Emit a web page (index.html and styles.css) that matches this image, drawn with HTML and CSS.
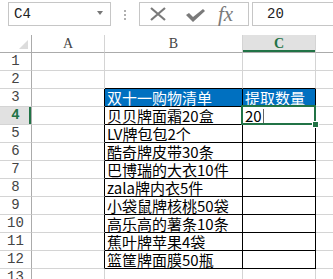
FILE: index.html
```html
<!DOCTYPE html>
<html lang="zh-CN">
<head>
    <meta charset="UTF-8">
    <title>双十一购物清单</title>
    <link rel="stylesheet" href="styles.css">
</head>
<body>
    <div class="formula-bar">
        <div class="name-box">
            <span>C4</span>
            <span class="arrow"></span>
        </div>
        <div class="grip">
            <i></i><i></i><i></i>
        </div>
        <div class="fn-buttons">
            <svg class="icon-x" width="18" height="14" viewBox="0 0 18 14">
                <path d="M2 1 L16 13 M16 1 L2 13" stroke="#7a7a7a" stroke-width="2.2" fill="none"/>
            </svg>
            <svg class="icon-check" width="21" height="15" viewBox="0 0 21 15">
                <path d="M1 7 L4 5 L8 9 L18 1 L20 3 L8 14 Z" fill="#7a7a7a"/>
            </svg>
            <span class="fx">fx</span>
        </div>
        <div class="formula-input">20</div>
    </div>

    <div class="grid-wrap">
        <table class="sheet">
            <tr class="col-head">
                <th class="corner">
                    <svg width="9" height="9" viewBox="0 0 9 9"><path d="M9 0 L9 9 L0 9 Z" fill="#dcdcdc"/></svg>
                </th>
                <th class="w-a">A</th>
                <th class="w-b">B</th>
                <th class="w-c sel">C</th>
                <th class="w-d"></th>
            </tr>
            <tr><th>1</th><td></td><td></td><td></td><td></td></tr>
            <tr><th>2</th><td></td><td class="top"></td><td class="top"></td><td></td></tr>
            <tr><th>3</th><td class="edge"></td><td class="box head">双十一购物清单</td><td class="box head">提取数量</td><td></td></tr>
            <tr><th class="sel">4</th><td class="edge"></td><td class="box">贝贝牌面霜20盒</td><td class="box active">20<span class="caret"></span></td><td></td></tr>
            <tr><th>5</th><td class="edge"></td><td class="box">LV牌包包2个</td><td class="box"></td><td></td></tr>
            <tr><th>6</th><td class="edge"></td><td class="box">酷奇牌皮带30条</td><td class="box"></td><td></td></tr>
            <tr><th>7</th><td class="edge"></td><td class="box">巴博瑞的大衣10件</td><td class="box"></td><td></td></tr>
            <tr><th>8</th><td class="edge"></td><td class="box">zala牌内衣5件</td><td class="box"></td><td></td></tr>
            <tr><th>9</th><td class="edge"></td><td class="box">小袋鼠牌核桃50袋</td><td class="box"></td><td></td></tr>
            <tr><th>10</th><td class="edge"></td><td class="box">高乐高的薯条10条</td><td class="box"></td><td></td></tr>
            <tr><th>11</th><td class="edge"></td><td class="box">蕉叶牌苹果4袋</td><td class="box"></td><td></td></tr>
            <tr><th>12</th><td class="edge"></td><td class="box">篮筐牌面膜50瓶</td><td class="box"></td><td></td></tr>
            <tr><th>13</th><td></td><td></td><td></td><td></td></tr>
        </table>
    </div>
</body>
</html>
```

FILE: styles.css
```css
body {
    margin: 0;
    padding: 0;
    background-color: #fff;
    font-family: "Noto Sans CJK SC", sans-serif;
    width: 333px;
    height: 279px;
    overflow: hidden;
}

/* formula bar */
.formula-bar {
    display: flex;
    align-items: flex-start;
    height: 35px;
    padding-top: 2px;
    box-sizing: border-box;
}

.name-box {
    display: flex;
    align-items: center;
    justify-content: space-between;
    margin-left: 8px;
    width: 103px;
    height: 24px;
    box-sizing: border-box;
    border: 1px solid #c6c6c6;
    padding: 0 7px 0 5px;
    font-family: "Liberation Mono", monospace;
    font-size: 14px;
    color: #222;
}

.arrow {
    width: 0;
    height: 0;
    border-left: 3px solid transparent;
    border-right: 3px solid transparent;
    border-top: 4px solid #777;
    margin-top: -3px;
}

.grip {
    display: flex;
    flex-direction: column;
    gap: 2px;
    margin: 8px 13px 0 13px;
}

.grip i {
    display: block;
    width: 2px;
    height: 2px;
    background-color: #b0b0b0;
}

.fn-buttons {
    display: flex;
    align-items: center;
    width: 110px;
    height: 24px;
    box-sizing: border-box;
    border: 1px solid #c6c6c6;
    padding-left: 9px;
}

.icon-x {
    margin-right: 18px;
}

.icon-check {
    margin-right: 12px;
    margin-top: 2px;
}

.fx {
    font-family: "Liberation Serif", serif;
    font-style: italic;
    font-size: 21px;
    line-height: 22px;
    color: #7a7a7a;
}

.formula-input {
    margin-left: 3px;
    flex: 1;
    height: 24px;
    box-sizing: border-box;
    border: 1px solid #c6c6c6;
    border-right: none;
    padding-left: 14px;
    line-height: 22px;
    font-family: "Liberation Mono", monospace;
    font-size: 14px;
    color: #222;
}

/* sheet grid */
.grid-wrap {
    overflow: hidden;
    height: 244px;
}

.sheet {
    border-spacing: 0;
    table-layout: fixed;
    width: 350px;
}

.sheet th,
.sheet td {
    box-sizing: border-box;
    height: 18px;
    padding: 0;
    border-right: 1px solid #d4d4d4;
    border-bottom: 1px solid #d4d4d4;
    line-height: 17px;
    white-space: nowrap;
    overflow: visible;
}

.sheet th {
    font-family: "Liberation Mono", monospace;
    font-weight: normal;
    font-size: 14px;
    color: #444;
    text-align: center;
    width: 32px;
}

.col-head th {
    border-bottom-color: #ababab;
    font-family: "Liberation Serif", serif;
    font-size: 14px;
}

.sheet tr th:first-child {
    border-right-color: #ababab;
}

.corner {
    text-align: right !important;
    vertical-align: bottom;
}

.corner svg {
    display: block;
    margin: 0 3px 3px auto;
}

.w-a { width: 73px !important; }
.w-b { width: 138px !important; }
.w-c { width: 73px !important; }
.w-d { width: 34px !important; }

.sheet th.sel {
    background-color: #e1e1e1;
    color: #217346;
    font-weight: bold;
}

.col-head th.sel {
    box-shadow: inset 0 -2px 0 #217346;
}

.sheet tr th.sel:first-child {
    box-shadow: inset -2px 0 0 #217346;
}

.sheet td {
    font-size: 15px;
    color: #000;
    padding-left: 2px;
}

.sheet td.edge {
    border-right-color: #000;
}

.sheet td.top {
    border-bottom-color: #000;
}

.sheet td.box {
    border-right-color: #000;
    border-bottom-color: #000;
}

.sheet td.head {
    background-color: #0070c0;
    color: #fff;
}

.sheet td.active {
    position: relative;
}

.sheet td.active::after {
    content: "";
    position: absolute;
    left: -2px;
    top: -2px;
    right: -1px;
    bottom: -1px;
    border: 2px solid #217346;
}

.sheet td.active::before {
    content: "";
    position: absolute;
    right: -4px;
    bottom: -4px;
    width: 5px;
    height: 5px;
    background-color: #217346;
    border: 1px solid #fff;
    z-index: 1;
}

.caret {
    display: inline-block;
    width: 1px;
    height: 15px;
    background-color: #666;
    margin-left: 1px;
    vertical-align: -2px;
}
```
